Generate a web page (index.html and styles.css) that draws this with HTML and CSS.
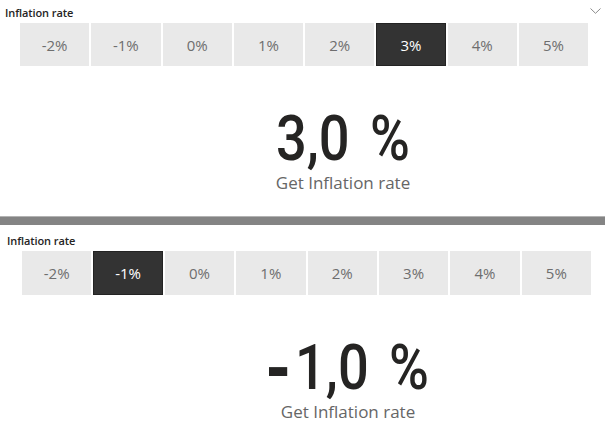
FILE: index.html
```html
<!DOCTYPE html>
<html>
<head>
<meta charset="utf-8">
<link rel="stylesheet" href="styles.css">
</head>
<body>
<section class="panel panel-top">
  <div class="head">
    <span class="label">Inflation rate</span>
    <svg class="chev" width="11" height="6" viewBox="0 0 11 6"><polyline points="0.5,0.5 5.5,5.3 10.5,0.5" fill="none" stroke="#8a8a8a" stroke-width="1"/></svg>
  </div>
  <div class="slicer">
    <div class="btn">-2%</div>
    <div class="btn">-1%</div>
    <div class="btn">0%</div>
    <div class="btn">1%</div>
    <div class="btn">2%</div>
    <div class="btn sel">3%</div>
    <div class="btn">4%</div>
    <div class="btn">5%</div>
  </div>
  <div class="card">
    <div class="value"><span class="num">3,0 %</span></div>
    <div class="caption">Get Inflation rate</div>
  </div>
</section>
<div class="divider"></div>
<section class="panel panel-bottom">
  <div class="head">
    <span class="label">Inflation rate</span>
  </div>
  <div class="slicer">
    <div class="btn">-2%</div>
    <div class="btn sel">-1%</div>
    <div class="btn">0%</div>
    <div class="btn">1%</div>
    <div class="btn">2%</div>
    <div class="btn">3%</div>
    <div class="btn">4%</div>
    <div class="btn">5%</div>
  </div>
  <div class="card">
    <div class="value"><span class="num"><span class="minus">-</span>1,0 %</span></div>
    <div class="caption">Get Inflation rate</div>
  </div>
</section>
</body>
</html>
```
FILE: styles.css
```css
html, body {
  margin: 0;
  padding: 0;
  background: #ffffff;
}
body {
  width: 605px;
  height: 428px;
  overflow: hidden;
  font-family: "Open Sans", "Noto Sans", sans-serif;
}
.panel {
  display: flex;
  flex-direction: column;
}
.panel-top {
  padding: 6px 17px 22px 5px;
}
.panel-bottom {
  padding: 9px 14px 0 7px;
}
.head {
  display: flex;
  justify-content: space-between;
  align-items: flex-start;
  height: 14px;
}
.label {
  font-size: 11px;
  line-height: 14px;
  font-weight: 600;
  color: #252423;
  letter-spacing: -0.1px;
}
.chev {
  margin-top: 2px;
  margin-right: -13px;
}
.slicer {
  display: grid;
  grid-template-columns: repeat(8, 1fr);
  gap: 2px;
  margin-top: 3px;
  margin-left: 15px;
  height: 43px;
}
.panel-bottom .slicer {
  height: 44px;
}
.btn {
  background: #e9e9e9;
  color: #6e6e6e;
  font-size: 15px;
  display: flex;
  align-items: center;
  justify-content: center;
  box-sizing: border-box;
}
.btn.sel {
  background: #333333;
  border: 1px solid #232323;
  color: #ffffff;
}
.card {
  margin-top: 41px;
  display: flex;
  flex-direction: column;
  align-items: center;
}
.panel-top .card {
  margin-left: 76px;
  margin-right: -17px;
}
.panel-bottom .card {
  margin-left: 84px;
  margin-right: -14px;
}
.value {
  height: 63px;
  line-height: 63px;
  font-family: Roboto, sans-serif;
  font-size: 63px;
  font-weight: 500;
  color: #252423;
}
.num {
  display: inline-block;
  transform: scaleX(0.86);
  word-spacing: 8px;
}
.minus {
  display: inline-block;
  transform: scale(1.3, 1.5);
  margin-right: 9px;
  margin-left: 2px;
}
.caption {
  margin-top: 2px;
  font-size: 17px;
  line-height: 22px;
  color: #666666;
}
.divider {
  height: 8px;
  border-top: 1px solid #b3b3b3;
  background: #848484;
}
```
